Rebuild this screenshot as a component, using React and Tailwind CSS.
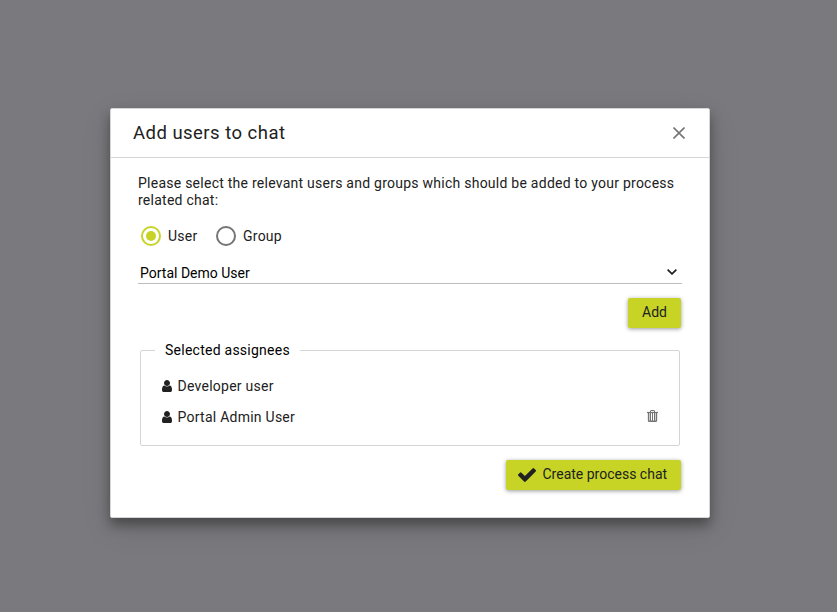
import React from 'react';

function UserIcon() {
  return (
    <svg viewBox="0 0 1280 1536" className="mb-[2px] h-[12px] w-[10px] shrink-0" preserveAspectRatio="none" fill="#212121">
      <path d="M1280 1271q0 109-62.5 187t-150.5 78h-854q-88 0-150.5-78t-62.5-187q0-85 8.500-160.500t31.500-152 58.500-131 94-89 134.500-34.500q131 128 313 128t313-128q76 0 134.500 34.500t94 89 58.500 131 31.500 152 8.500 160.500zm-256-887q0 159-112.500 271.500t-271.500 112.500-271.500-112.500-112.500-271.500 112.500-271.500 271.500-112.500 271.500 112.500 112.500 271.500z" />
    </svg>
  );
}

function TrashIcon() {
  return (
    <svg viewBox="0 0 11 12" className="mb-[3px] h-[12px] w-[11px]" fill="none" stroke="#757575">
      <path d="M0 2.500h11" strokeWidth="1.2" />
      <path d="M3.500 2V1q0-.5.5-.5h3q.5 0 .5.5v1" />
      <path d="M1.600 2.500v8q0 .8.8.8h6.200q.8 0 .8-.8v-8" strokeWidth="1.5" />
      <path d="M3.500 3v8M5.500 3v8M7.500 3v8" />
    </svg>
  );
}

function Radio({ label, checked }) {
  return (
    <label className="flex items-center gap-[7px]">
      <span
        className={
          checked
            ? 'flex size-5 items-center justify-center rounded-full border-2 border-[#c7d426]'
            : 'flex size-5 items-center justify-center rounded-full border-2 border-[#757575]'
        }
      >
        {checked && <span className="size-[10px] rounded-full bg-[#c7d426]" />}
      </span>
      <span>{label}</span>
    </label>
  );
}

export default function App() {
  return (
    <div className="flex h-[612px] w-[837px] items-start bg-[#7a797d] pt-[108px] pl-[110px] font-['Roboto','Liberation_Sans',sans-serif] text-[14px] leading-[17px] tracking-[0.25px] text-[#212121]">
      <div className="flex h-[410px] w-[600px] flex-col rounded-[2px] border border-[#d5d5d5] bg-white shadow-[0_7px_12px_rgba(0,0,0,0.35),0_10px_30px_rgba(0,0,0,0.12)]">
        <header className="flex h-[49px] shrink-0 items-center justify-between border-b border-[#d5d5d5] pr-[24px] pl-[22px]">
          <h1 className="text-[18.5px] leading-6 tracking-[0.47px]">Add users to chat</h1>
          <svg viewBox="0 0 12 12" className="size-3" fill="none" stroke="#757575" strokeWidth="1.6">
            <path d="M.5.5l11 11M11.500.5l-11 11" />
          </svg>
        </header>
        <main className="flex flex-col pt-[17px] pr-[27px] pl-[27px]">
          <p className="whitespace-nowrap">
            Please select the relevant users and groups which should be added to your process
            <br />
            related chat:
          </p>
          <div className="mt-[17px] flex gap-[18.5px] pl-[3px]">
            <Radio label="User" checked />
            <Radio label="Group" />
          </div>
          <div className="mt-[17px] flex h-[21px] items-center justify-between border-b border-[#bdbdbd] pr-[5px] pl-[2px] tracking-normal text-black">
            <span>Portal Demo User</span>
            <svg viewBox="0 0 10 6" className="mb-[3px] h-[6px] w-[10px]" fill="none" stroke="#212121" strokeWidth="1.7">
              <path d="M.6.6L5 4.900 9.400.6" />
            </svg>
          </div>
          <button className="mt-[14px] mr-px flex h-[30px] w-[53px] items-center justify-center self-end rounded-[2px] bg-[#c7d426] pb-px tracking-normal shadow-[0_1px_4px_rgba(0,0,0,0.4)]">
            Add
          </button>
          <fieldset className="mx-[2px] mt-[14px] h-[104px] rounded-[2px] border border-[#d5d5d5] px-[21px]">
            <legend className="-ml-[7px] px-[10px] text-black">Selected assignees</legend>
            <ul className="mt-[19px] flex flex-col gap-[14px]">
              <li className="flex items-center gap-[5.5px]">
                <UserIcon />
                Developer user
              </li>
              <li className="flex items-center gap-[5.5px]">
                <UserIcon />
                <span className="grow">Portal Admin User</span>
                <TrashIcon />
              </li>
            </ul>
          </fieldset>
          <button className="mt-[14px] mr-px flex h-[30px] w-[175px] items-center gap-[7px] self-end rounded-[2px] bg-[#c7d426] pl-[11.5px] tracking-normal shadow-[0_1px_4px_rgba(0,0,0,0.4)]">
            <svg viewBox="121 334 1550 1188" className="h-[14px] w-[18px]" fill="#212121">
              <path d="M1671 566q0 40-28 68l-724 724-136 136q-28 28-68 28t-68-28l-136-136-362-362q-28-28-28-68t28-68l136-136q28-28 68-28t68 28l294 295 656-657q28-28 68-28t68 28l136 136q28 28 28 68z" />
            </svg>
            <span className="pb-px">Create process chat</span>
          </button>
        </main>
      </div>
    </div>
  );
}
